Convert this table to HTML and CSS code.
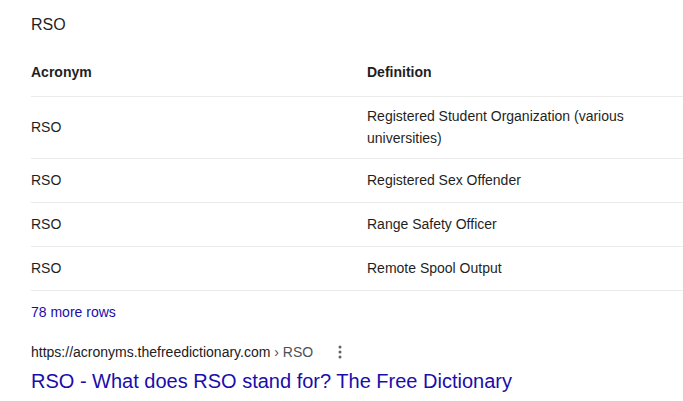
FILE: index.html
```html
<!DOCTYPE html>
<html lang="en">
<head>
<meta charset="utf-8">
<title>RSO</title>
<link rel="stylesheet" href="styles.css">
</head>
<body>
<div class="page">
  <div class="heading">RSO</div>
  <table class="acro">
    <thead>
      <tr><th class="c1">Acronym</th><th class="c2">Definition</th></tr>
    </thead>
    <tbody>
      <tr><td>RSO</td><td>Registered Student Organization (various universities)</td></tr>
      <tr><td>RSO</td><td>Registered Sex Offender</td></tr>
      <tr><td>RSO</td><td>Range Safety Officer</td></tr>
      <tr><td>RSO</td><td>Remote Spool Output</td></tr>
    </tbody>
  </table>
  <a class="more" href="#">78 more rows</a>
  <div class="cite">
    <span class="url">https://acronyms.thefreedictionary.com</span><span class="crumb"> › RSO</span>
    <svg class="kebab" width="4" height="14" viewBox="0 0 4 14"><circle cx="2" cy="2" r="1.5"/><circle cx="2" cy="7" r="1.5"/><circle cx="2" cy="12" r="1.5"/></svg>
  </div>
  <a class="title" href="#">RSO - What does RSO stand for? The Free Dictionary</a>
</div>
</body>
</html>
```
FILE: styles.css
```css
* { box-sizing: border-box; }
html, body { margin: 0; padding: 0; background: #fff; }
body {
  font-family: "Liberation Sans", Arial, sans-serif;
  color: #1f1f1f;
  overflow: hidden;
}
.page {
  padding: 13px 0 0 31px;
  display: flex;
  flex-direction: column;
  align-items: flex-start;
}
.heading {
  font-size: 16px;
  line-height: 24px;
}
.acro {
  margin-top: 11px;
  width: 652px;
  border-collapse: collapse;
  font-size: 14px;
  line-height: 22px;
}
.acro th {
  text-align: left;
  font-weight: bold;
  height: 48px;
  padding: 0 16px 0 0;
  border-bottom: 1px solid #ebebeb;
  vertical-align: middle;
}
.acro th.c1 { width: 336px; }
.acro td {
  height: 44px;
  padding: 8px 40px 9px 0;
  border-bottom: 1px solid #ebebeb;
  vertical-align: middle;
}
.more {
  margin-top: 10px;
  font-size: 14px;
  line-height: 22px;
  color: #1a0dab;
  text-decoration: none;
}
.cite {
  margin-top: 18px;
  font-size: 14px;
  line-height: 22px;
  display: flex;
  align-items: center;
}
.url { color: #202124; }
.crumb { color: #4d5156; white-space: pre; }
.kebab {
  margin-left: 25px;
  fill: #5f6368;
}
.title {
  margin-top: 5px;
  font-size: 20px;
  line-height: 26px;
  color: #1a0dab;
  text-decoration: none;
}
```
